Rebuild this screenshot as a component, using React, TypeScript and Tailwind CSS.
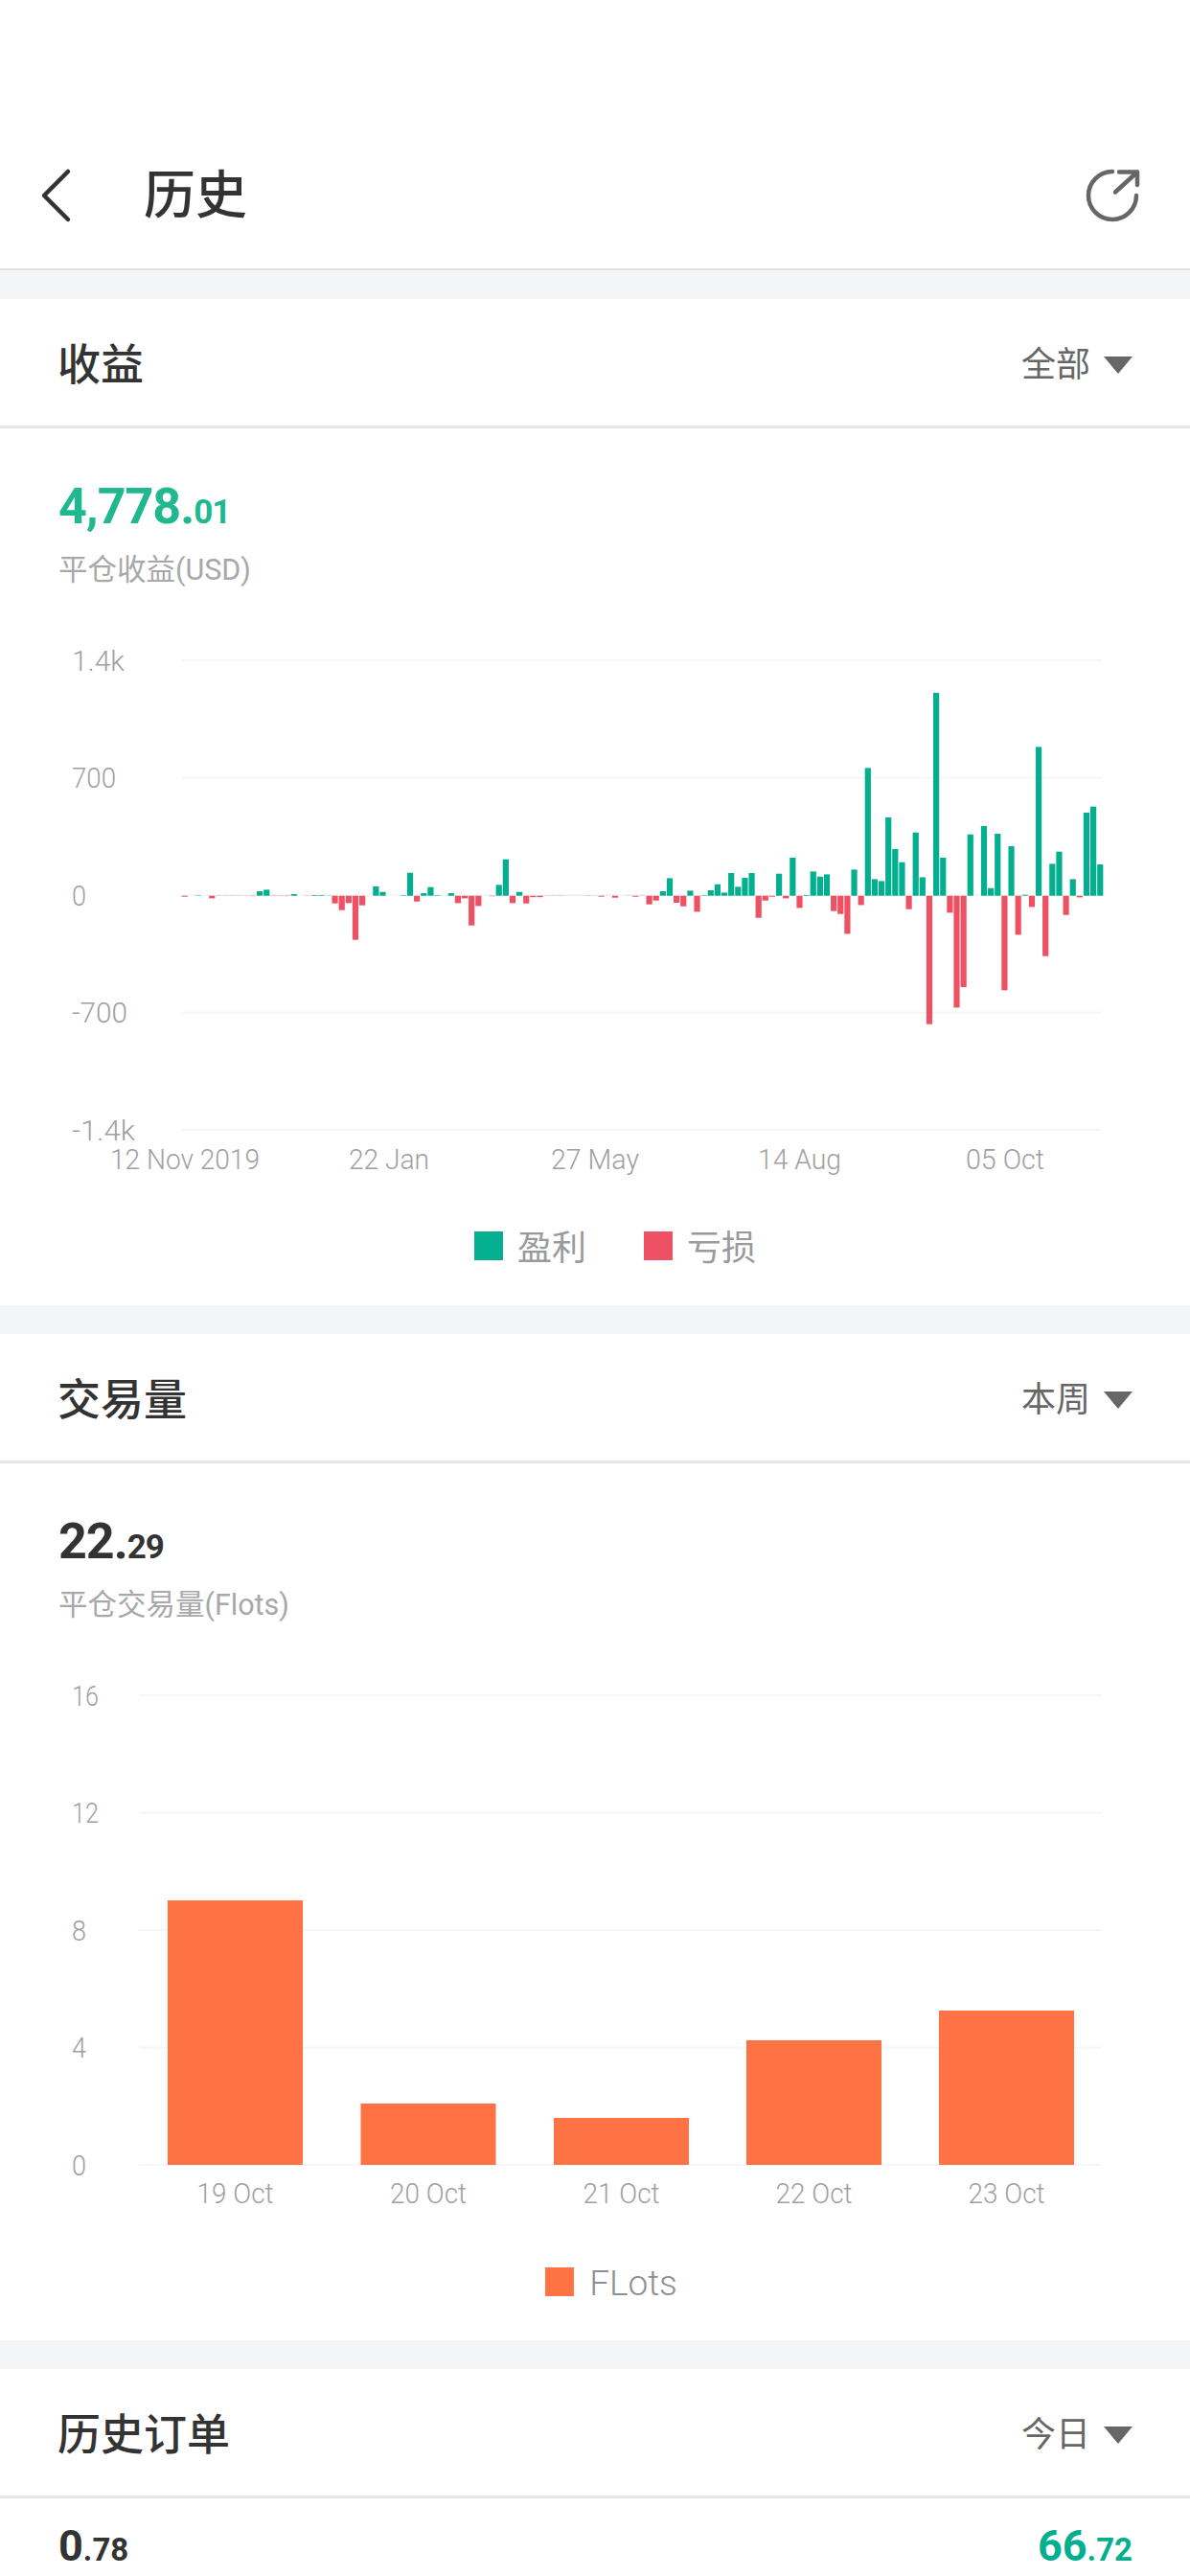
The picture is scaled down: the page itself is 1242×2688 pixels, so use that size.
const pnl = [
  -1, 0, 0.4, 0, -2.7, 0.2, 0.2, 0.2, 0.2, -0.2,
  -0.4, 4.7, 6.3, -0.3, -0.3, -0.4, 1.7, 0, -0.2, 0.7,
  0.7, 0.2, -8, -15, -7.7, -46, -10, 0, 9.7, 4,
  0, 0, 0.5, 24, -6, 2.7, 9, 0.5, 0, 2.7,
  -7.7, -2.7, -31, -10.7, 0, -0.5, 11.3, 38, -7.7, 4,
  -8, -1.5, -1.5, -0.2, 0.2, -0.3, 0.1, 0.1, 0.1, -0.3,
  0.1, -1, 0.1, -2, 0, -0.2, -1, -0.2, -9, -5,
  4.7, 18.3, -7.3, -11, 5.3, -16.7, 0.5, 5.7, 12, 3.3,
  23.7, 9.3, 18.7, 23.7, -23, -5, -1, 23, -2.7, 39.7,
  -12.7, 0.7, 25.3, 20, 22.3, -16, -19, -39.7, 27.3, -9.7,
  133.3, 17.3, 15.3, 81.7, 48.7, 35, -14, 66, 19.3, -134,
  211.7, 39.7, -17.7, -116.7, -95.3, 64, 0, 72.7, 8, 64.7,
  -98.7, 51.7, -40.7, 1, -11.7, 155.3, -63, 33.3, 46, -20,
  17.3, -1.7, 86.7, 93, 32.7,
]

const lots = [
  { label: '19 Oct', x: 175, top: 243 },
  { label: '20 Oct', x: 376.5, top: 455 },
  { label: '21 Oct', x: 578, top: 470 },
  { label: '22 Oct', x: 779, top: 389 },
  { label: '23 Oct', x: 980, top: 358 },
]

const gridY = [29, 151.5, 274, 396.5, 519]
const labelClass = "fill-[#a0a0a0] text-[30px] font-light"

function AxisLabel({ x, y, w, children }: { x: number; y: number; w: number; children: string }) {
  // DIN-ish narrow figures: squeeze Roboto to the measured width
  return (
    <text x={x} y={y} textLength={w} lengthAdjust="spacingAndGlyphs" className={labelClass}>
      {children}
    </text>
  )
}

function SectionHeader({ title, filter }: { title: string; filter: string }) {
  return (
    <div className="flex h-[135px] items-center justify-between border-b-[3px] border-[#e6e6e6] pl-[60px] pr-[60px] pt-[5px]">
      <span className="pt-[2px] text-[45px] font-medium text-[#333]">{title}</span>
      <div className="flex items-center gap-[14px]">
        <span className="text-[36px] text-[#666]">{filter}</span>
        <span className="h-0 w-0 border-x-[15px] border-t-[18px] border-x-transparent border-t-[#666]" />
      </div>
    </div>
  )
}

function Stat({ whole, cents, color, label }: { whole: string; cents: string; color: string; label: string }) {
  return (
    <div className="pl-[61px] pt-[57px]">
      <div className={`h-[50px] font-bold leading-[50px] tracking-[-1px] ${color}`}>
        <span className="text-[52px]">{whole}</span>
        <span className="text-[35px]">{cents}</span>
      </div>
      <div className="mt-[21px] h-[40px] text-[30.5px] leading-[40px] text-[#a8a8a8]">{label}</div>
    </div>
  )
}

function Legend({ items }: { items: { name: string; color: string }[] }) {
  return (
    <div className="mt-[45px] flex h-[30px] items-center justify-center gap-[60px] pl-[42px]">
      {items.map((item) => (
        <div key={item.name} className="flex items-center gap-[15px]">
          <span className={`h-[30px] w-[30px] ${item.color}`} />
          <span className="pt-[5px] text-[36px] leading-[30px] text-[#9a9a9a]">{item.name}</span>
        </div>
      ))}
    </div>
  )
}

function Grid({ x1 }: { x1: number }) {
  return (
    <>
      {gridY.map((y) => (
        <rect key={y} x={x1} y={y - 1} width={1150 - x1} height={2} fill="#f6f6f6" />
      ))}
    </>
  )
}

function PnlChart() {
  const zero = 274.7
  const yLabels = [
    { text: '1.4k', w: 55 },
    { text: '700', w: 46 },
    { text: '0', w: 15 },
    { text: '-700', w: 58 },
    { text: '-1.4k', w: 66 },
  ]
  const xLabels = [
    { text: '12 Nov 2019', x: 115, w: 156 },
    { text: '22 Jan', x: 364, w: 84 },
    { text: '27 May', x: 575, w: 92 },
    { text: '14 Aug', x: 791, w: 87 },
    { text: '05 Oct', x: 1008, w: 82 },
  ]
  return (
    <svg className="mt-[45px] block" width={1242} height={580} viewBox="0 0 1242 580">
      <Grid x1={190} />
      {pnl.map((v, i) => {
        if (v === 0) return null
        const x = 192.7 + i * 7.131 - 3.1
        return (
          <rect
            key={i}
            x={x}
            y={v > 0 ? zero - v : zero}
            width={6.2}
            height={Math.abs(v)}
            fill={v > 0 ? '#03af8f' : '#ee5163'}
          />
        )
      })}
      {yLabels.map((l, i) => (
        <AxisLabel key={l.text} x={75} y={gridY[i] + 10.5} w={l.w}>{l.text}</AxisLabel>
      ))}
      {xLabels.map((l) => (
        <AxisLabel key={l.text} x={l.x} y={560} w={l.w}>{l.text}</AxisLabel>
      ))}
    </svg>
  )
}

function LotsChart() {
  const yLabels = [
    { text: '16', w: 28 },
    { text: '12', w: 28 },
    { text: '8', w: 15 },
    { text: '4', w: 15 },
    { text: '0', w: 15 },
  ]
  return (
    <svg className="mt-[45px] block" width={1242} height={581} viewBox="0 0 1242 581">
      <Grid x1={145} />
      {lots.map((b) => (
        <g key={b.label}>
          <rect x={b.x} y={b.top} width={141} height={519 - b.top} fill="#ff7243" />
          <AxisLabel x={b.x + 30.5} y={559} w={80}>{b.label}</AxisLabel>
        </g>
      ))}
      {yLabels.map((l, i) => (
        <AxisLabel key={l.text} x={75} y={gridY[i] + 10.5} w={l.w}>{l.text}</AxisLabel>
      ))}
    </svg>
  )
}

export default function App() {
  return (
    <div className="flex h-[2688px] w-[1242px] flex-col overflow-hidden bg-white font-['Roboto','Noto_Sans_CJK_SC',sans-serif]">
      <header className="flex h-[282px] shrink-0 items-center justify-between border-b-2 border-[#dfe1e5] pl-[40px] pr-[50px] pt-[128px]">
        <div className="flex items-center">
          <svg width={36} height={60} viewBox="0 0 36 60" fill="none" stroke="#333" strokeWidth={4.5} strokeLinecap="round" strokeLinejoin="round">
            <path d="M31 5L6 30L31 55" />
          </svg>
          <span className="ml-[74px] text-[54px] font-medium text-[#333]">历史</span>
        </div>
        <svg width={62} height={62} viewBox="20 13 62 62" fill="none" stroke="#666" strokeWidth={4.5} strokeLinecap="round" strokeLinejoin="round">
          <path d="M76 44A25 25 0 1 1 51 19" />
          <path d="M58 19.5H77V33M77 19.5L54 40.5" />
        </svg>
      </header>

      <div className="h-[30px] shrink-0 bg-[#f4f5f7]" />
      <section className="shrink-0 pb-[47px]">
        <SectionHeader title="收益" filter="全部" />
        <Stat whole="4,778." cents="01" color="text-[#20b98f]" label="平仓收益(USD)" />
        <PnlChart />
        <Legend items={[{ name: '盈利', color: 'bg-[#03af8f]' }, { name: '亏损', color: 'bg-[#ee5163]' }]} />
      </section>

      <div className="h-[30px] shrink-0 bg-[#f4f5f7]" />
      <section className="shrink-0 pb-[46px]">
        <SectionHeader title="交易量" filter="本周" />
        <Stat whole="22." cents="29" color="text-[#333]" label="平仓交易量(Flots)" />
        <LotsChart />
        <div className="mt-[45px] flex h-[30px] items-center justify-center gap-[16px] pl-[34px]">
          <span className="h-[30px] w-[30px] bg-[#ff7243]" />
          <span className="pt-[3px] text-[37px] font-light leading-[30px] text-[#8f8f8f]">FLots</span>
        </div>
      </section>

      <div className="h-[30px] shrink-0 bg-[#f4f5f7]" />
      <section className="shrink-0">
        <SectionHeader title="历史订单" filter="今日" />
        <div className="flex items-center justify-between pl-[61px] pr-[60px] pt-[28px] font-bold leading-[44px]">
          <div className="text-[#333]">
            <span className="text-[45px]">0</span>
            <span className="text-[33px]">.78</span>
          </div>
          <div className="text-[#03af8f]">
            <span className="text-[45px]">66</span>
            <span className="text-[33px]">.72</span>
          </div>
        </div>
      </section>
    </div>
  )
}
